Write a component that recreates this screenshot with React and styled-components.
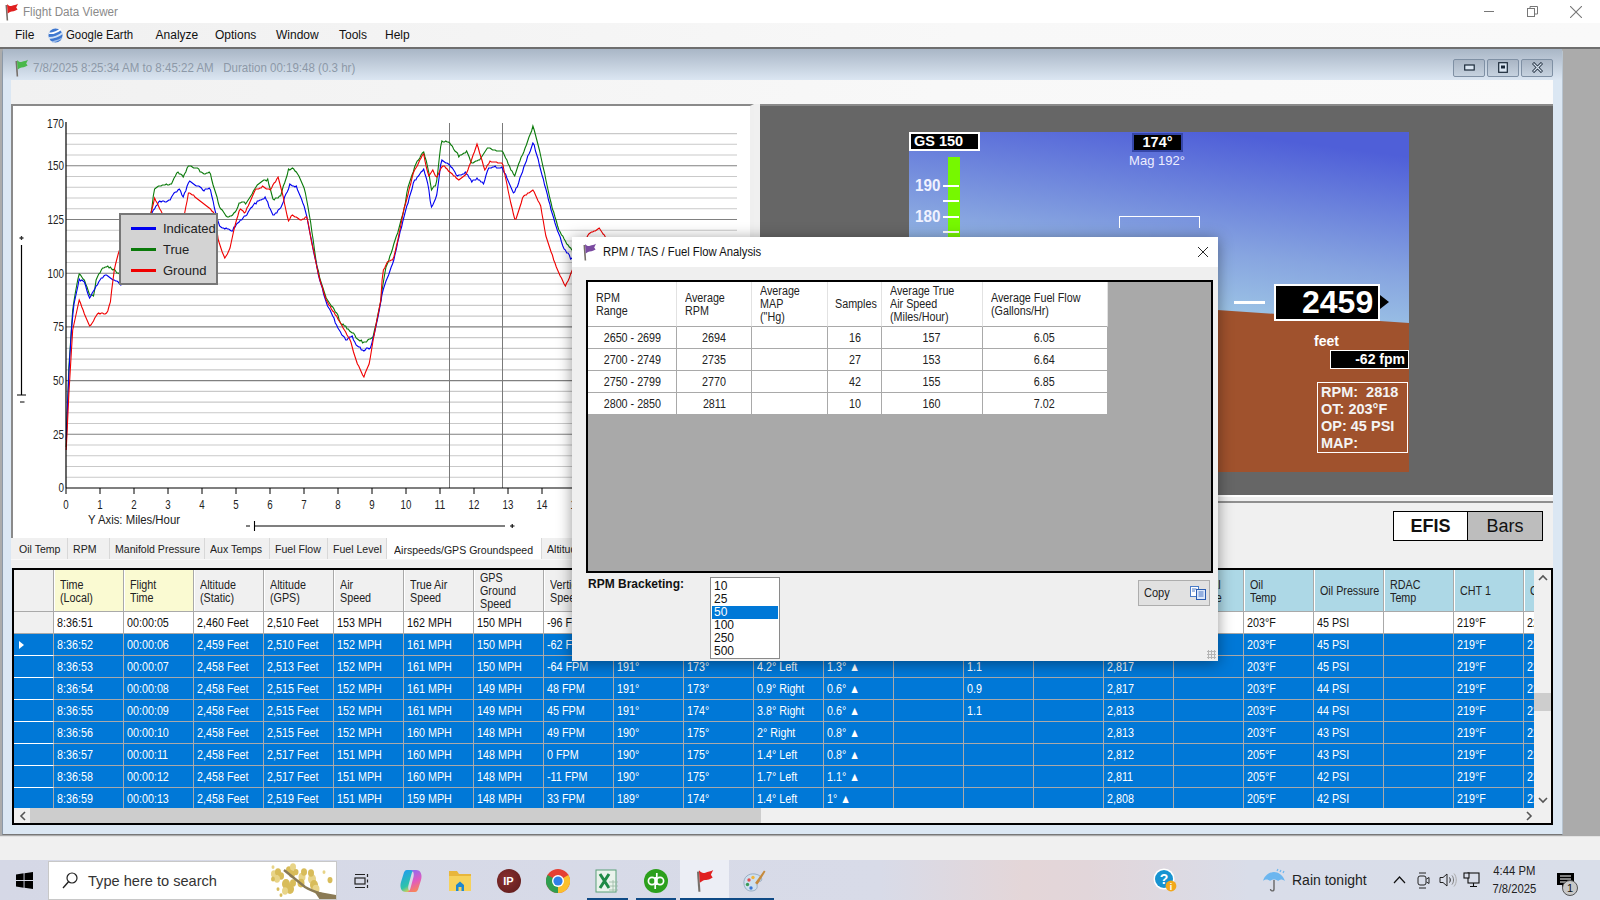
import React, { useMemo } from "react";
import styled, { createGlobalStyle } from "styled-components";

const Global = createGlobalStyle`
  html, body { margin: 0; padding: 0; overflow: hidden; background: #f0f0f0; }
  body { font-family: "Liberation Sans", Arial, sans-serif; font-size: 12px; color: #111; }
  * { box-sizing: border-box; }
`;

const Screen = styled.div`position: relative; width: 1600px; height: 900px; display: flex; flex-direction: column; overflow: hidden;`;
const TitleBar = styled.div`height: 23px; background: #fff; display: flex; align-items: center; padding-left: 4px; color: #8a8a8a; gap: 4px; flex: none;`;
const TitleText = styled.span`font-size: 12px;`;
const WinControls = styled.div`margin-left: auto; display: flex; align-items: center; padding-right: 18px; gap: 32px;`;
const MenuBar = styled.div`height: 24px; flex: none; background: linear-gradient(90deg, #f0f0f0, #f8f8f8 60%, #f9f9f9); display: flex; align-items: center; padding-left: 15px; color: #111;`;
const MenuItem = styled.span`width: ${p => p.$w}px; display: flex; align-items: center; gap: 3px; font-size: 12px;`;
const Mdi = styled.div`flex: 1; min-height: 0; background: #ababab; border-top: 2px solid #6e6e6e; padding: 0 37px 1px 2px; display: flex;`;
const Child = styled.div`flex: 1; display: flex; flex-direction: column; background: #dbe7f3; border-radius: 4px 4px 0 0; padding: 0 9px 10px 8px; border-left: 1px solid #8b99a8; border-bottom: 1px solid #777; border-right: 1px solid #b8c4d0;`;
const ChildTitle = styled.div`height: 31px; flex: none; margin: 0 -9px 0 -8px; padding: 6px 9px 0 11px; background: linear-gradient(180deg, #a9b6c6, #dbe6f2); display: flex; align-items: center; gap: 4px; color: #8d99a8; font-size: 12.4px; white-space: pre;`;
const ChildButtons = styled.div`margin-left: auto; display: flex; gap: 2px;`;
const ChildButton = styled.div`width: 32px; height: 18px; border: 1px solid #7f90a4; border-radius: 2px; background: linear-gradient(180deg, #a9b5c4, #c6d2df); display: flex; align-items: center; justify-content: center;`;
const ToolStrip = styled.div`height: 24px; flex: none; background: linear-gradient(90deg, #f1f1f1, #f8f8f8 60%, #fafafa);`;
const TopSplit = styled.div`display: flex; height: 464px; flex: none; background: #f0f0f0; gap: 6px;`;
const ChartColumn = styled.div`width: 743px; flex: none; display: flex; flex-direction: column;`;
const ChartPanel = styled.div`position: relative; height: 434px; flex: none; background: #fff; border-top: 2px solid #8a8a8a; border-left: 2px solid #8a8a8a; border-right: 4px solid #efefef;`;
const ChartSvg = styled.svg`display: block; position: absolute; left: -2px; top: -2px;`;
const Legend = styled.div`position: absolute; left: 106px; top: 107px; width: 99px; height: 72px; background: #d3d3d3; border: 2px solid #777; padding: 3px 0 0 10px; display: flex; flex-direction: column;`;
const LegendRow = styled.div`height: 21px; display: flex; align-items: center; gap: 7px; font-size: 13px; color: #222;`;
const LegendLine = styled.div`width: 25px; height: 2.5px; background: ${p => p.$c};`;
const TabStrip = styled.div`height: 22px; flex: none; display: flex; background: #f0f0f0; padding-left: 3px; overflow: hidden; border-bottom: 1px solid #f8f8f8;`;
const Tab = styled.div`width: ${p => p.$w}px; flex: none; display: flex; align-items: center; padding-left: ${p => p.$active ? 7 : 5}px; padding-top: ${p => p.$active ? 3 : 0}px; background: ${p => p.$active ? "#fff" : "#f0f0f0"}; border-right: 1px solid #d8d8d8; font-size: 11px; white-space: nowrap; color: #222;`;
const RightColumn = styled.div`flex: 1; display: flex; flex-direction: column; min-width: 0;`;
const EfisPanel = styled.div`height: 391px; flex: none; background: #666; border-top: 2px solid #8a8a8a; padding: 26px 0 0 149px;`;
const Scene = styled.div`position: relative; width: 500px; height: 340px; overflow: hidden;`;
const SceneBack = styled.svg`position: absolute; inset: 0;`;
const GsBox = styled.div`position: absolute; left: 0; top: 0; width: 71px; height: 19px; background: #000; border: 2px solid #fff; color: #fff; font-weight: bold; font-size: 14.5px; line-height: 15px; padding-left: 3px;`;
const HeadingBox = styled.div`position: absolute; left: 223px; top: 1px; width: 51px; height: 19px; background: #000; border: 2px solid #3546a8; color: #fff; font-weight: bold; font-size: 14.5px; line-height: 15px; text-align: center;`;
const MagLabel = styled.div`position: absolute; left: 213px; top: 21px; width: 70px; text-align: center; color: #eef; font-size: 13px;`;
const SpeedBar = styled.div`position: absolute; left: 39px; top: 25px; width: 12px; height: 130px; background: #76f800;`;
const SpeedTick = styled.div`position: absolute; left: 34px; top: ${p => p.$y}px; width: 16px; height: 1.5px; background: #fff;`;
const SpeedLabel = styled.div`position: absolute; left: 6px; top: ${p => p.$y}px; color: #f0f2ff; font-weight: bold; font-size: 16px; line-height: 18px; transform: scaleX(.95); transform-origin: left;`;
const Bracket = styled.div`position: absolute; left: 210px; top: 84px; width: 81px; height: 12px; border: 1.5px solid #fff; border-bottom: 0;`;
const Dash = styled.div`position: absolute; left: 325px; top: 169px; width: 31px; height: 3px; background: #fff;`;
const AltBox = styled.div`position: absolute; left: 365px; top: 152px; width: 106px; height: 37px; background: #000; border: 2px solid #fff; color: #fff; font-weight: bold; font-size: 32px; line-height: 33px; padding-left: 26px; &::after { content: ""; position: absolute; right: -11px; top: 9px; border-left: 9px solid #000; border-top: 7px solid transparent; border-bottom: 7px solid transparent; }`;
const FeetLabel = styled.div`position: absolute; left: 405px; top: 201px; color: #fff; font-weight: bold; font-size: 14px;`;
const FpmBox = styled.div`position: absolute; left: 421px; top: 218px; width: 79px; height: 19px; background: #000; border: 1.5px solid #fff; color: #fff; font-weight: bold; font-size: 14px; line-height: 16px; text-align: right; padding-right: 3px;`;
const EngineBox = styled.div`position: absolute; left: 408px; top: 250px; width: 91px; height: 71px; border: 1.5px solid #fff; color: #f4f4f4; font-weight: bold; font-size: 14.5px; line-height: 17px; padding: 1px 0 0 3px; white-space: pre;`;
const ToggleArea = styled.div`flex: 1; background: #f0f0f0; border-top: 2px solid #fff; position: relative; padding: 14px 0 0 633px;`;
const ToggleRule = styled.div`position: absolute; left: 0; right: 0; top: 4px; height: 2px; background: #8f8f8f;`;
const Toggle = styled.div`display: flex; width: 150px; height: 30px; border: 1.5px solid #000;`;
const ToggleItem = styled.div`flex: ${p => p.$f}; display: flex; align-items: center; justify-content: center; font-size: 18px; font-weight: ${p => p.$on ? "bold" : "normal"}; background: ${p => p.$on ? "#fff" : "#bdbdbd"}; & + & { border-left: 1.5px solid #000; }`;

const Grid = styled.div`flex: none; height: 257px; margin-left: 1px; border: 2px solid #000; background: #f0f0f0; display: flex; flex-direction: column;`;
const GridTop = styled.div`display: flex; height: 238px; flex: none;`;
const GridTable = styled.div`width: 1520px; flex: none; overflow: hidden;`;
const GridRow = styled.div`display: flex; height: ${p => p.$h || 22}px; width: 1660px; background: ${p => p.$sel ? "#0078d7" : "#fff"}; color: ${p => p.$sel ? "#fff" : "#111"}; border-bottom: 1px solid #a9a9a9;`;
const Corner = styled.div`width: 40px; flex: none; background: ${p => p.$sel ? "#0078d7" : "#f0f0f0"}; border-right: 1px solid #a9a9a9; ${p => p.$sel ? "border-bottom: 1px solid #fff; margin-bottom: -1px; position: relative; z-index: 1;" : ""} display: flex; align-items: center; padding-left: 5px;`;
const RowArrow = styled.div`border-left: 5px solid #fff; border-top: 4.5px solid transparent; border-bottom: 4.5px solid transparent;`;
const HeadCell = styled.div`width: 70px; flex: none; padding: 2px 0 0 5px; display: flex; align-items: center; background: ${p => p.$bg || "#f0f0f0"}; border-right: 1px solid #a9a9a9; border-left: 1px solid #fff; overflow: hidden; line-height: 13px; font-size: 12.5px; color: #222;`;
const DataCell = styled.div`width: 70px; flex: none; padding: 1px 0 0 3px; border-right: 1px solid #a9a9a9; overflow: hidden; line-height: 21px; font-size: 12.5px;`;
const Narrow = styled.span`display: inline-block; white-space: pre; transform: scaleX(${p => p.$k || 0.86}); transform-origin: ${p => p.$center ? "center" : "left center"};`;
const VScroll = styled.div`flex: 1; position: relative; background: #f0f0f0;`;
const ScrollUp = styled.div`position: absolute; top: 4px; left: 4px; display: flex;`;
const ScrollDown = styled.div`position: absolute; bottom: 4px; left: 4px; display: flex;`;
const ScrollLeft = styled.div`position: absolute; top: 3px; left: 5px; display: flex;`;
const ScrollRight = styled.div`position: absolute; top: 3px; left: 1512px; display: flex;`;
const VThumb = styled.div`position: absolute; left: 0; right: 0; top: 123px; height: 18px; background: #cdcdcd;`;
const HScroll = styled.div`flex: 1; display: flex; align-items: center; background: #f0f0f0; position: relative;`;
const HThumb = styled.div`position: absolute; left: 16px; width: 731px; top: 0; bottom: 0; background: #cdcdcd;`;

const Modal = styled.div`position: absolute; left: 572px; top: 237px; width: 646px; height: 424px; background: #efefef; box-shadow: 0 2px 14px rgba(0,0,0,.42); display: flex; flex-direction: column;`;
const ModalTitle = styled.div`height: 30px; flex: none; background: #fff; display: flex; align-items: center; padding: 0 10px 0 10px; gap: 6px; font-size: 12px; color: #111;`;
const ModalClose = styled.span`margin-left: auto; display: flex;`;
const ModalBody = styled.div`flex: 1; padding: 13px 5px 0 14px; position: relative;`;
const TablePane = styled.div`height: 293px; border: 2px solid #000; background: #a9a9a9;`;
const AnalysisGrid = styled.div`display: grid; grid-template-columns: 89px 75px 76px 54px 100.5px 125px; width: 519.5px; background: #fff;`;
const AHead = styled.div`height: 45px; display: flex; align-items: center; padding: 1px 0 0 ${p => p.$pl || 8}px; border-right: 1px solid #e2e2e2; border-bottom: 1px solid #a9a9a9; line-height: 13px; font-size: 12.5px; color: #222;`;
const ACell = styled.div`height: 22px; padding-top: 1px; display: flex; align-items: center; justify-content: center; border-right: 1px solid #a9a9a9; border-bottom: 1px solid #a9a9a9; font-size: 12.5px; color: #222;`;
const BottomRow = styled.div`display: flex; align-items: flex-start; padding-top: 4px;`;
const BracketLabel = styled.div`width: 124px; padding-left: 2px; font-weight: bold; font-size: 12px; color: #111; white-space: nowrap;`;
const ListBox = styled.div`width: 70px; height: 82px; background: #fff; border: 1px solid #8a8a8a; padding: 2px 1px 1px;`;
const ListItem = styled.div`height: 13px; line-height: 13px; padding-left: 2px; font-size: 12px; background: ${p => p.$sel ? "#0078d7" : "transparent"}; color: ${p => p.$sel ? "#fff" : "#111"};`;
const CopyButton = styled.div`margin-left: auto; margin-top: 3px; margin-right: 3px; width: 72px; height: 26px; background: #e1e1e1; border: 1px solid #adadad; display: flex; align-items: center; justify-content: space-between; padding: 0 3px 0 5px; font-size: 12px; color: #222;`;
const Grip = styled.div`position: absolute; right: 2px; bottom: 2px; width: 9px; height: 9px; background-image: radial-gradient(#b5b5b5 1px, transparent 1.2px); background-size: 3px 3px;`;

const StatusStrip = styled.div`height: 24px; flex: none; background: #f0f0f0; border-top: 1px solid #e2e2e2;`;
const Taskbar = styled.div`height: 40px; flex: none; display: flex; align-items: center; background: linear-gradient(90deg, #d5d8e6 0, #d8dbe8 55%, #e4d6d8 64%, #e2d6da 68%, #d9dde9 78%, #d9dee9 100%);`;
const StartSlot = styled.div`width: 48px; height: 100%; display: flex; align-items: center; justify-content: center; flex: none;`;
const SearchBox = styled.div`width: 289px; height: 39px; margin-top: 1px; flex: none; background: #fff; border: 1px solid #c8c8c8; display: flex; align-items: center; padding-left: 13px; gap: 10px; font-size: 14.6px; color: #333; position: relative; overflow: hidden;`;
const Branch = styled.svg`position: absolute; right: 0; top: 0;`;
const TaskSlot = styled.div`position: relative; width: 49px; height: 100%; padding-top: 2px; flex: none; display: flex; align-items: center; justify-content: center; background: ${p => p.$active ? "#eceef5" : "transparent"};
  ${p => p.$run ? `&::after { content: ""; position: absolute; left: ${p.$run[0]}px; right: ${p.$run[1]}px; bottom: 0; height: 2px; background: #0f4a85; }` : ""}`;
const TrayHelp = styled.div`margin-left: 375px; width: 24px; display: flex; flex: none;`;
const Weather = styled.div`margin-left: 85px; display: flex; align-items: center; gap: 6px; font-size: 14px; color: #222; flex: none; width: 110px;`;
const Tray = styled.div`display: flex; align-items: center; flex: none; margin-left: 21px;`;
const TrayIcon = styled.div`width: ${p => p.$w}px; flex: none; display: flex; align-items: center;`;
const Clock = styled.div`width: 58px; flex: none; text-align: center; font-size: 12px; line-height: 18px; color: #222;`;
const Notify = styled.div`position: relative; margin-left: 14px; width: 28px; height: 30px; padding-top: 8px; flex: none;`;
const NotifyBadge = styled.div`position: absolute; left: 5px; top: 15px; width: 16px; height: 16px; border-radius: 50%; background: #c8c8c8; border: 1px solid #555; font-size: 11px; line-height: 14px; text-align: center; color: #111;`;
const IpBadge = styled.div`width: 24px; height: 24px; border-radius: 50%; background: radial-gradient(circle at 40% 40%, #8a3030, #5a1a1a); color: #fff; font-weight: bold; font-size: 11px; display: flex; align-items: center; justify-content: center;`;

const Flag = ({ color = "#e02020", size = 1 }) => (
  <svg width={15 * size} height={18 * size} viewBox="0 0 15 18">
    <path d="M2.3 2 L3.4 17.5" stroke="#77706a" strokeWidth="1.6" fill="none" />
    <path d="M3 1 C5 3 6 3.5 8 2.8 C10 2.2 12 2 14 .8 L12.2 4.5 L13.6 6.6 C11 8.6 8 8.3 6 9 L3.7 10.5 Z" fill={color} />
  </svg>
);
const EarthIcon = () => (
  <svg width="15" height="17" viewBox="0 0 15 17">
    <circle cx="7.5" cy="8.5" r="7" fill="#3f78d0" />
    <path d="M1 6 C5 7 9 5 13 2" stroke="#fff" strokeWidth="1.6" fill="none" />
    <path d="M1 11 C6 11 11 9 14.5 6" stroke="#cfe0f6" strokeWidth="1.8" fill="none" />
    <path d="M4 15 C8 14 12 13 14 11" stroke="#9fbde8" strokeWidth="1.2" fill="none" />
  </svg>
);
const WinLogo = () => (
  <svg width="17" height="17" viewBox="0 0 17 17"><path d="M0 2.4 L7.6 1.3 V8 H0 Z M8.5 1.2 L17 0 V8 H8.5 Z M0 9 H7.6 V15.7 L0 14.6 Z M8.5 9 H17 V17 L8.5 15.8 Z" fill="#000" /></svg>
);
const SearchGlass = () => (
  <svg width="16" height="17" viewBox="0 0 16 17"><circle cx="10" cy="6" r="5" fill="none" stroke="#222" strokeWidth="1.2" /><path d="M6.5 9.8 L1 16" stroke="#222" strokeWidth="1.4" /></svg>
);
const GoldBranch = () => {
  const berries = [[6, 12, 3], [10, 10, 3], [13, 14, 3], [9, 17, 3], [5, 17, 2], [21, 8, 3], [25, 5, 3], [24, 12, 3], [28, 10, 2.5], [34, 15, 3.5], [36, 10, 3], [33, 21, 3.5], [44, 17, 4], [46, 23, 4], [43, 11, 3], [48, 27, 3.5], [18, 22, 4], [22, 27, 4], [17, 29, 3], [25, 21, 3], [62, 18, 2.5], [56, 10, 1.5], [10, 27, 1.5], [13, 33, 1.5], [5, 5, 1.5]];
  return (
    <Branch width="68" height="38" viewBox="0 0 68 38">
      {berries.map(([x, y, r], i) => <ellipse key={i} cx={x} cy={y} rx={r} ry={r * 1.25} fill={i % 3 ? "#d8bc5a" : "#e8d488"} />)}
      <path d="M68 37 C52 31 45 30 37 25 L16 8" stroke="#8a7a55" strokeWidth="2.4" fill="none" />
      <path d="M68 38 V33 L46 29 L52 38 Z" fill="#8a7a55" />
    </Branch>
  );
};
const TaskView = () => (
  <svg width="16" height="16" viewBox="0 0 16 16" fill="none" stroke="#222" strokeWidth="1.2"><rect x="1" y="5" width="10" height="6" /><path d="M1 1.5 H11 M1 14.5 H11 M13.5 1 V4 M13.5 6.5 V9.5 M13.5 12 V15" /></svg>
);
const Copilot = () => (
  <svg width="24" height="24" viewBox="0 0 24 24">
    <defs>
      <linearGradient id="cpa" x1="0.2" y1="0" x2="0.6" y2="1"><stop offset="0" stopColor="#1f9cf0" /><stop offset=".7" stopColor="#2fc4a8" /><stop offset="1" stopColor="#f6d24a" /></linearGradient>
      <linearGradient id="cpb" x1="0.4" y1="0" x2="0.7" y2="1"><stop offset="0" stopColor="#8f6cf0" /><stop offset=".5" stopColor="#e05ac0" /><stop offset="1" stopColor="#fb8a4c" /></linearGradient>
    </defs>
    <path d="M8 1 C6 1 5 3 4.5 5 L2 13 C0.5 18 2 23 7 23 H13 C10 23 8.5 20 9.5 16 L12.5 5 C13 3 14 1.5 16 1 Z" fill="url(#cpa)" />
    <path d="M16 23 C18 23 19 21 19.5 19 L22 11 C23.5 6 22 1 17 1 H11 C14 1 15.5 4 14.5 8 L11.5 19 C11 21 10 22.5 8 23 Z" fill="url(#cpb)" />
  </svg>
);
const FolderIcon = () => (
  <svg width="22" height="24" viewBox="0 0 22 24">
    <path d="M0 2 H8 L10 5 H22 V22 H0 Z" fill="#e8b63c" />
    <path d="M0 7 H22 V22 H0 Z" fill="#f6d25c" />
    <path d="M7 22 V16 L11 12.5 L15 16 V22 H12.5 V18 H9.5 V22 Z" fill="#1f88d0" />
  </svg>
);
const Chrome = () => (
  <svg width="24" height="24" viewBox="0 0 24 24">
    <circle cx="12" cy="12" r="12" fill="#e53f33" />
    <path d="M12 12 L22.4 6 A12 12 0 0 1 12 24 Z" fill="#fbc02d" />
    <path d="M12 12 L12 24 A12 12 0 0 1 1.6 6 Z" fill="#2f9e4f" />
    <circle cx="12" cy="12" r="6" fill="#fff" /><circle cx="12" cy="12" r="4.6" fill="#2f7fe8" />
  </svg>
);
const Excel = () => (
  <svg width="24" height="24" viewBox="0 0 24 24">
    <rect x="1" y="1" width="20" height="22" fill="#eaf3ec" stroke="#5aa078" />
    <path d="M5 5 L14 19 M14 5 L5 19" stroke="#1f8a45" strokeWidth="3" />
    <path d="M14 13 H23 M14 17 H23 M14 21 H23 M18 11 V23" stroke="#9ab8a3" strokeWidth=".8" />
  </svg>
);
const QuickBooks = () => (
  <svg width="24" height="24" viewBox="0 0 24 24">
    <circle cx="12" cy="12" r="12" fill="#2ca01c" />
    <circle cx="8" cy="12" r="3.6" fill="none" stroke="#fff" strokeWidth="1.7" />
    <path d="M11.2 8 V20" stroke="#fff" strokeWidth="1.7" />
    <circle cx="16" cy="12" r="3.6" fill="none" stroke="#fff" strokeWidth="1.7" />
    <path d="M12.8 4 V16" stroke="#fff" strokeWidth="1.7" />
  </svg>
);
const Palette = () => (
  <svg width="24" height="24" viewBox="0 0 24 24">
    <path d="M2 15 C1 8 7 4 13 5 C19 6 21 10 19 12 C17 13 14 13 15 16 C16 20 13 22 9 22 C5 22 2.5 19 2 15 Z" fill="#cfe0ee" stroke="#8aa0b8" strokeWidth=".8" />
    <circle cx="7" cy="11" r="1.7" fill="#e24c4c" /><circle cx="11" cy="8.5" r="1.7" fill="#f2b53c" /><circle cx="5.5" cy="15.5" r="1.7" fill="#3a9a5a" /><circle cx="9" cy="19" r="1.7" fill="#3a78d8" />
    <path d="M13 14 L22 1.5 L23.5 2.5 L15.5 15.5 Z" fill="#c68a3c" />
  </svg>
);
const HelpIcon = () => (
  <svg width="24" height="24" viewBox="0 0 24 24">
    <circle cx="11" cy="11" r="10.5" fill="#fff" /><circle cx="11" cy="11" r="9" fill="#1793d1" />
    <text x="11" y="16" textAnchor="middle" fontSize="14" fontWeight="bold" fill="#fff" fontFamily="Liberation Sans">?</text>
    <circle cx="18" cy="18" r="5.4" fill="#f2a81c" />
    <text x="18" y="21.5" textAnchor="middle" fontSize="9" fontWeight="bold" fill="#fff" fontFamily="Liberation Sans">i</text>
  </svg>
);
const Umbrella = () => (
  <svg width="24" height="24" viewBox="0 0 24 24">
    <path d="M1 13 C3 6 9 4 12 4 C16 4 21 7 23 13 C20 11 18 11 16 13 C14 11 10 11 8 13 C6 11 3 11 1 13 Z" fill="#6cb6ef" />
    <path d="M12 12 V21 C12 23.5 8.5 23.5 8.5 21" fill="none" stroke="#666" strokeWidth="1.4" />
    <path d="M15 3 L16 1 M18 4 L19 2 M21 5 L22 3" stroke="#6cb6ef" strokeWidth="1.2" />
  </svg>
);
const TrayChevron = () => (<svg width="13" height="8" viewBox="0 0 13 8"><path d="M1 7 L6.5 1 L12 7" fill="none" stroke="#111" strokeWidth="1.2" /></svg>);
const CamIcon = () => (<svg width="13" height="17" viewBox="0 0 13 17" fill="none" stroke="#222" strokeWidth="1"><path d="M2 1 H9 M2 16 H9" /><rect x="1" y="4" width="8" height="9" rx="2" /><path d="M9.5 7 L12 5.5 V11.5 L9.5 10" /></svg>);
const SpeakerIcon = () => (<svg width="18" height="16" viewBox="0 0 18 16" fill="none" stroke="#222" strokeWidth="1"><path d="M1 5.5 H4 L8 2 V14 L4 10.5 H1 Z" /><path d="M10.5 5.5 C11.5 7 11.5 9 10.5 10.5" /><path d="M13 3.5 C15 6 15 10 13 12.5" stroke="#777" /><path d="M15 1.5 C18 5 18 11 15 14.5" stroke="#aaa" /></svg>);
const NetIcon = () => (<svg width="17" height="16" viewBox="0 0 17 16" fill="none" stroke="#111" strokeWidth="1.1"><rect x="5" y="1" width="11" height="10" /><rect x="1" y="1" width="5" height="5" fill="#d9dde9" /><path d="M10.5 11 V14.5 M7 14.5 H14" /></svg>);
const NotifyIcon = () => (<svg width="17" height="15" viewBox="0 0 17 15"><path d="M0 0 H17 V12 H8 L5 15 V12 H0 Z" fill="#000" /><path d="M3 3 H14 M3 6 H14 M3 9 H10" stroke="#fff" strokeWidth="1" /></svg>);
const CopyIcon = () => (
  <svg width="16" height="14" viewBox="0 0 16 14">
    <rect x=".5" y=".5" width="8" height="10" fill="#fff" stroke="#4a7cc8" />
    <rect x="6.5" y="3.5" width="9" height="10" fill="#dce8fa" stroke="#2a5cb0" />
    <path d="M8.5 6 H13.5 M8.5 8 H13.5 M8.5 10 H13.5 M2 3 H6.5 M2 5 H5" stroke="#3a6cc0" strokeWidth=".9" />
  </svg>
);
const Cross = ({ s = 10, c = "#222" }) => (<svg width={s} height={s} viewBox="0 0 10 10"><path d="M0 0 L10 10 M10 0 L0 10" stroke={c} strokeWidth=".9" /></svg>);

const z1 = a => { const r = []; for (let i = 0; i < a.length; i += 2) r.push([a[i] / 1.96, a[i + 1] / 3]); return r; };
const z3 = a => { const r = []; for (let i = 0; i < a.length; i += 2) r.push([a[i] / 2.613, 300 + a[i + 1] / 3]); return r; };

const greenPts = [
  ...z3([173, 440, 176, 330, 180, 200, 186, 100, 190, 30]),
  ...z1([146, 890, 155, 820, 165, 840, 175, 885, 183, 890, 190, 830, 205, 800, 220, 805, 235, 825, 250, 830, 296, 640, 303, 565, 320, 553, 335, 555, 348, 515, 360, 530, 370, 495, 385, 505, 400, 520, 412, 518, 420, 565, 430, 620, 446, 655, 460, 640, 470, 605, 482, 610, 498, 570, 510, 545, 525, 540, 535, 600, 550, 590, 565, 510, 575, 505, 590, 540, 598, 570, 610, 680, 620, 790, 630, 850]),
  ...z3([855, 0, 880, 40, 890, 70, 910, 88, 925, 100, 935, 118, 950, 128, 975, 110, 985, 60, 995, 0]),
  ...z1([755, 810, 775, 720, 790, 640, 800, 560, 815, 490, 830, 455, 840, 510, 845, 570, 855, 555, 865, 425, 880, 425, 900, 470, 915, 455, 925, 490, 940, 480, 955, 445, 985, 455, 1008, 530, 1025, 460, 1045, 378, 1060, 470, 1080, 610, 1095, 690, 1110, 730, 1122, 750, 1160, 800]),
];
const bluePts = [
  ...z3([173, 420, 176, 330, 180, 220, 186, 100, 192, 20]),
  ...z1([155, 840, 165, 845, 175, 895, 190, 855, 205, 825, 220, 835, 235, 852, 250, 850, 296, 640, 312, 605, 330, 605, 350, 565, 360, 590, 370, 545, 385, 555, 400, 570, 412, 565, 420, 620, 430, 680, 455, 692, 470, 660, 480, 650, 500, 610, 520, 590, 535, 648, 550, 625, 568, 555, 580, 558, 590, 590, 600, 640, 610, 720, 625, 830]),
  ...z3([850, 0, 870, 50, 885, 90, 905, 120, 920, 110, 935, 140, 950, 152, 970, 140, 980, 90, 995, 10]),
  ...z1([750, 870, 770, 790, 790, 660, 810, 550, 830, 505, 840, 560, 845, 622, 855, 595, 865, 480, 880, 490, 895, 525, 915, 520, 925, 545, 935, 535, 948, 550, 958, 500, 985, 505, 1008, 582, 1025, 510, 1045, 428, 1060, 510, 1075, 600, 1090, 680, 1105, 745, 1122, 780, 1160, 820]),
];
const redPts = [
  ...z3([173, 450, 180, 280, 190, 90, 207, 0, 220, 40, 235, 80, 255, 40, 280, 40, 290, 0]),
  ...z1([218, 880, 225, 800, 234, 750, 270, 690, 296, 640, 303, 595, 318, 640, 340, 680, 362, 640, 370, 575, 390, 600, 410, 625, 420, 640, 428, 720, 440, 775, 450, 750, 460, 680, 470, 625, 480, 640, 500, 570, 515, 560, 530, 570, 545, 530, 555, 590, 565, 665, 572, 645, 590, 660, 602, 650, 610, 720, 625, 830]),
  ...z3([852, 0, 880, 50, 900, 90, 915, 120, 930, 180, 950, 232, 965, 190, 975, 120, 995, 0]),
  ...z1([750, 815, 760, 785, 770, 780, 780, 720, 790, 640, 810, 520, 830, 460, 840, 530, 848, 510, 855, 535, 868, 495, 885, 520, 900, 540, 915, 520, 935, 432, 950, 510, 960, 485, 985, 490, 1000, 600, 1010, 665, 1025, 590, 1045, 570, 1060, 620, 1070, 710, 1090, 800, 1108, 860, 1122, 810, 1140, 740, 1155, 700, 1175, 685, 1190, 720]),
];

const buildLine = (pts, noise, seed) => {
  const s = [...pts].sort((a, b) => a[0] - b[0]);
  const out = [];
  let j = 0;
  for (let x = s[0][0]; x <= s[s.length - 1][0]; x += 1.3) {
    while (j < s.length - 2 && s[j + 1][0] < x) j++;
    const [x0, y0] = s[j], [x1, y1] = s[j + 1];
    const t = x1 === x0 ? 0 : Math.min(1, (x - x0) / (x1 - x0));
    const n = Math.sin(x * 12.9898 + seed) * 43758.5453;
    const y = y0 + (y1 - y0) * t + (n - Math.floor(n) - 0.5) * noise;
    out.push(`${x.toFixed(1)},${Math.round(y)}`);
  }
  return out.join(" ");
};

const Chart = () => {
  const lines = useMemo(() => [
    [greenPts, "#0a7a0a", 2, 1],
    [bluePts, "#0000f0", 2.2, 2],
    [redPts, "#f00000", 0.8, 3],
  ].map(([p, c, n, s]) => ({ c, d: buildLine(p, n, s) })), []);
  const yOf = v => 488 - v * 2.148;
  const minors = []; for (let v = 5; v <= 165; v += 5) minors.push(v);
  const xs = []; for (let i = 0; i <= 15; i++) xs.push(i);
  const yLabels = [0, 25, 50, 75, 100, 125, 150];
  return (
    <ChartSvg width="743" height="434" viewBox="11 104 743 434">
      {minors.filter(v => v % 25).map(v => <line key={v} x1="66" x2="737" y1={yOf(v)} y2={yOf(v)} stroke="#c9c9c9" strokeWidth="1.1" />)}
      {minors.filter(v => !(v % 25)).map(v => <line key={v} x1="66" x2="737" y1={yOf(v)} y2={yOf(v)} stroke="#808080" strokeWidth="1.1" />)}
      <line x1="449.5" x2="449.5" y1="123" y2="488" stroke="#7a7a7a" />
      <line x1="502.5" x2="502.5" y1="123" y2="488" stroke="#7a7a7a" />
      {lines.map(l => <polyline key={l.c} points={l.d} fill="none" stroke={l.c} strokeWidth="1.1" />)}
      <line x1="66" x2="66" y1="122" y2="488" stroke="#000" strokeWidth="1.2" />
      <line x1="66" x2="737" y1="488" y2="488" stroke="#000" strokeWidth="1.2" />
      {xs.map(i => <line key={i} x1={66 + i * 34} x2={66 + i * 34} y1="488" y2="494" stroke="#000" />)}
      {xs.map(i => { const t = String(i); return <text key={i} x={66 + i * 34} y="509" fontSize="13.5" fill="#222" textAnchor="middle" textLength={t.length * 5.4} lengthAdjust="spacingAndGlyphs" fontFamily="Liberation Sans">{t}</text>; })}
      {yLabels.map(v => { const t = String(v); return <text key={v} x="64" y={v === 0 ? 492 : yOf(v) + 4.5} fontSize="13.5" fill="#222" textAnchor="end" textLength={t.length * 5.5} lengthAdjust="spacingAndGlyphs" fontFamily="Liberation Sans">{t}</text>; })}
      <text x="64" y="128" fontSize="13.5" fill="#222" textAnchor="end" textLength="17" lengthAdjust="spacingAndGlyphs" fontFamily="Liberation Sans">170</text>
      <text x="88" y="524" fontSize="12.5" fill="#222" textLength="92" lengthAdjust="spacingAndGlyphs" fontFamily="Liberation Sans">Y Axis: Miles/Hour</text>
      <path d="M19.5 238 H23.5 M21.5 236 V240" stroke="#333" strokeWidth="1.3" />
      <path d="M21.5 245 V395 M17 395 H26 M20 402 H24.5" stroke="#000" strokeWidth="1.2" />
      <path d="M246 526 H250 M254.5 521 V531 M254.5 526 H505 M510 526 H514.5 M512.2 524 V528" stroke="#000" strokeWidth="1.1" />
    </ChartSvg>
  );
};

const heads = [
  ["Time\n(Local)", "#fafad2"], ["Flight\nTime", "#fafad2"], ["Altitude\n(Static)"], ["Altitude\n(GPS)"], ["Air\nSpeed"], ["True Air\nSpeed"], ["GPS\nGround\nSpeed"], ["Vertical\nSpeed"],
  ["Magnetic\nCourse"], ["Ground\nTrack"], ["Slip\nAngle"], ["Pitch"], ["Fuel\nLevel"], ["G\nForce"], ["Amps"], ["RPM"], ["Terminal\nMeasure", "#add8e6"],
  ["Oil\nTemp", "#add8e6"], ["Oil Pressure", "#add8e6"], ["RDAC\nTemp", "#add8e6"], ["CHT 1", "#add8e6"], ["CHT 2", "#add8e6"],
];
const row = (t, f, a, g, air, tas, gs, vs, m, c, sl, p, x, r, o, op, c2 = "221°F") => [t, f, `2,${a} Feet`, `2,${g} Feet`, `${air} MPH`, `${tas} MPH`, `${gs} MPH`, `${vs} FPM`, m, c, sl, p, "", x, "", r, "", o, `${op} PSI`, "", "219°F", c2];
const rows = [
  row("8:36:51", "00:00:05", 460, 510, 153, 162, 150, -96, "191°", "172°", "3.9° Left", "1.5° ▲", "", "2,818", "203°F", 45),
  row("8:36:52", "00:00:06", 459, 510, 152, 161, 150, -62, "191°", "173°", "4.4° Left", "1.4° ▲", "", "2,818", "203°F", 45),
  row("8:36:53", "00:00:07", 458, 513, 152, 161, 150, -64, "191°", "173°", "4.2° Left", "1.3° ▲", "1.1", "2,817", "203°F", 45),
  row("8:36:54", "00:00:08", 458, 515, 152, 161, 149, 48, "191°", "173°", "0.9° Right", "0.6° ▲", "0.9", "2,817", "203°F", 44),
  row("8:36:55", "00:00:09", 458, 515, 152, 161, 149, 45, "191°", "174°", "3.8° Right", "0.6° ▲", "1.1", "2,813", "203°F", 44),
  row("8:36:56", "00:00:10", 458, 515, 152, 160, 148, 49, "190°", "175°", "2° Right", "0.8° ▲", "", "2,813", "203°F", 43),
  row("8:36:57", "00:00:11", 458, 517, 151, 160, 148, 0, "190°", "175°", "1.4° Left", "0.8° ▲", "", "2,812", "205°F", 43),
  row("8:36:58", "00:00:12", 458, 517, 151, 160, 148, -11, "190°", "175°", "1.7° Left", "1.1° ▲", "", "2,811", "205°F", 42),
  row("8:36:59", "00:00:13", 458, 519, 151, 159, 148, 33, "189°", "174°", "1.4° Left", "1° ▲", "", "2,808", "205°F", 42),
];

const analysisHeads = [["RPM\nRange"], ["Average\nRPM"], ["Average\nMAP\n(\"Hg)"], ["Samples", 7], ["Average True\nAir Speed\n(Miles/Hour)"], ["Average Fuel Flow\n(Gallons/Hr)"]];
const analysisRows = [
  ["2650 - 2699", "2694", "", "16", "157", "6.05"],
  ["2700 - 2749", "2735", "", "27", "153", "6.64"],
  ["2750 - 2799", "2770", "", "42", "155", "6.85"],
  ["2800 - 2850", "2811", "", "10", "160", "7.02"],
];
const tabs = [["Oil Temp", 53.5], ["RPM", 42], ["Manifold Pressure", 95.5], ["Aux Temps", 65], ["Fuel Flow", 57.5], ["Fuel Level", 59.5], ["Airspeeds/GPS Groundspeed", 154.5, true], ["Altitudes", 60]];
const menus = [["File", 33], ["Google Earth", 107.6, true], ["Analyze", 59.4], ["Options", 61], ["Window", 63], ["Tools", 46], ["Help", 40]];
const taskApps = [
  [<TaskView key="a" />], [<Copilot key="b" />], [<FolderIcon key="c" />], [<IpBadge key="d">IP</IpBadge>], [<Chrome key="e" />],
  [<Excel key="f" />, [5, 3]], [<QuickBooks key="g" />, [5, 4]], [<Flag key="h" size={1.3} />, [0, 0], true], [<Palette key="i" />, [0, 4]],
];

export default function App() {
  return (
    <Screen>
      <Global />
      <TitleBar>
        <Flag />
        <TitleText><Narrow $k={0.97}>Flight Data Viewer</Narrow></TitleText>
        <WinControls>
          <svg width="11" height="11" viewBox="0 0 11 11"><path d="M0 5.5 H10" stroke="#777" /></svg>
          <svg width="11" height="11" viewBox="0 0 11 11" fill="none" stroke="#777"><rect x=".5" y="2.5" width="7" height="8" /><path d="M3 2.5 V.5 H10.5 V8 H7.5" /></svg>
          <Cross s={12} c="#777" />
        </WinControls>
      </TitleBar>
      <MenuBar>
        {menus.map(([m, w, ic]) => <MenuItem key={m} $w={w}>{ic && <EarthIcon />}<Narrow $k={ic ? 0.95 : 1}>{m}</Narrow></MenuItem>)}
      </MenuBar>
      <Mdi>
        <Child>
          <ChildTitle>
            <Flag color="#49b84a" />
            <Narrow $k={0.93}>{"7/8/2025 8:25:34 AM to 8:45:22 AM   Duration 00:19:48 (0.3 hr)"}</Narrow>
            <ChildButtons>
              <ChildButton><svg width="11" height="7" viewBox="0 0 11 7"><rect x=".7" y="1" width="9.5" height="5" fill="#dbe6f2" stroke="#1a2838" strokeWidth="1.2" /></svg></ChildButton>
              <ChildButton><svg width="10" height="11" viewBox="0 0 10 11"><rect x=".7" y=".7" width="8.6" height="9.6" fill="#dbe6f2" stroke="#1a2838" strokeWidth="1.2" /><rect x="3" y="3.5" width="4" height="3" fill="#1a2838" /></svg></ChildButton>
              <ChildButton><svg width="11" height="11" viewBox="0 0 11 11"><path d="M1 1 L10 10 M10 1 L1 10" stroke="#1a2838" strokeWidth="3" /><path d="M1.5 1.5 L9.5 9.5 M9.5 1.5 L1.5 9.5" stroke="#dbe6f2" strokeWidth="1.2" /></svg></ChildButton>
            </ChildButtons>
          </ChildTitle>
          <ToolStrip />
          <TopSplit>
            <ChartColumn>
              <ChartPanel>
                <Chart />
                <Legend>
                  <LegendRow><LegendLine $c="#0000f0" />Indicated</LegendRow>
                  <LegendRow><LegendLine $c="#0a7a0a" />True</LegendRow>
                  <LegendRow><LegendLine $c="#f00000" />Ground</LegendRow>
                </Legend>
              </ChartPanel>
              <TabStrip>
                {tabs.map(([t, w, a]) => <Tab key={t} $w={w} $active={a}><Narrow $k={0.96}>{t}</Narrow></Tab>)}
              </TabStrip>
            </ChartColumn>
            <RightColumn>
              <EfisPanel>
                <Scene>
                  <SceneBack width="500" height="340" viewBox="0 0 500 340">
                    <defs>
                      <linearGradient id="sky" x1="0.62" y1="0" x2="0.5" y2="0.62">
                        <stop offset="0" stopColor="#4f5fd8" />
                        <stop offset=".55" stopColor="#87a5e0" />
                        <stop offset="1" stopColor="#a9d6e8" />
                      </linearGradient>
                    </defs>
                    <rect width="500" height="340" fill="url(#sky)" />
                    <path d="M0 157 L500 191 V340 H0 Z" fill="#a0522d" />
                  </SceneBack>
                  <SpeedBar />
                  <SpeedTick $y={53} /><SpeedTick $y={68} /><SpeedTick $y={84} /><SpeedTick $y={99} /><SpeedTick $y={115} />
                  <SpeedLabel $y={45}>190</SpeedLabel>
                  <SpeedLabel $y={76}>180</SpeedLabel>
                  <GsBox>GS 150</GsBox>
                  <HeadingBox>174°</HeadingBox>
                  <MagLabel>Mag 192°</MagLabel>
                  <Bracket />
                  <Dash />
                  <AltBox>2459</AltBox>
                  <FeetLabel>feet</FeetLabel>
                  <FpmBox>-62 fpm</FpmBox>
                  <EngineBox>{"RPM:  2818\nOT: 203°F\nOP: 45 PSI\nMAP:"}</EngineBox>
                </Scene>
              </EfisPanel>
              <ToggleArea>
                <ToggleRule />
                <Toggle>
                  <ToggleItem $f={74} $on>EFIS</ToggleItem>
                  <ToggleItem $f={75}>Bars</ToggleItem>
                </Toggle>
              </ToggleArea>
            </RightColumn>
          </TopSplit>
          <Grid>
            <GridTop>
              <GridTable>
                <GridRow $h={42}>
                  <Corner />
                  {heads.map(([h, bg], i) => <HeadCell key={i} $bg={bg}><Narrow>{h}</Narrow></HeadCell>)}
                </GridRow>
                {rows.map((r, i) => (
                  <GridRow key={i} $sel={i > 0}>
                    <Corner $sel={i > 0}>{i === 1 && <RowArrow />}</Corner>
                    {r.map((c, j) => <DataCell key={j}><Narrow>{c}</Narrow></DataCell>)}
                  </GridRow>
                ))}
              </GridTable>
              <VScroll>
                <ScrollUp><svg width="10" height="7" viewBox="0 0 10 7"><path d="M1 6 L5 2 L9 6" fill="none" stroke="#555" strokeWidth="1.6" /></svg></ScrollUp>
                <VThumb />
                <ScrollDown><svg width="10" height="7" viewBox="0 0 10 7"><path d="M1 1 L5 5 L9 1" fill="none" stroke="#555" strokeWidth="1.6" /></svg></ScrollDown>
              </VScroll>
            </GridTop>
            <HScroll>
              <ScrollLeft><svg width="7" height="10" viewBox="0 0 7 10"><path d="M6 1 L2 5 L6 9" fill="none" stroke="#555" strokeWidth="1.6" /></svg></ScrollLeft>
              <HThumb />
              <ScrollRight><svg width="7" height="10" viewBox="0 0 7 10"><path d="M1 1 L5 5 L1 9" fill="none" stroke="#555" strokeWidth="1.6" /></svg></ScrollRight>
            </HScroll>
          </Grid>
        </Child>
      </Mdi>
      <StatusStrip />
      <Taskbar>
        <StartSlot><WinLogo /></StartSlot>
        <SearchBox>
          <SearchGlass />
          <span>Type here to search</span>
          <GoldBranch />
        </SearchBox>
        {taskApps.map(([ic, run, act], i) => <TaskSlot key={i} $run={run} $active={act}>{ic}</TaskSlot>)}
        <TrayHelp><HelpIcon /></TrayHelp>
        <Weather><Umbrella />Rain tonight</Weather>
        <Tray>
          <TrayIcon $w={24}><TrayChevron /></TrayIcon>
          <TrayIcon $w={22}><CamIcon /></TrayIcon>
          <TrayIcon $w={24}><SpeakerIcon /></TrayIcon>
          <TrayIcon $w={22}><NetIcon /></TrayIcon>
        </Tray>
        <Clock><Narrow $k={0.94} $center>4:44 PM</Narrow><br /><Narrow $k={0.94} $center>7/8/2025</Narrow></Clock>
        <Notify>
          <NotifyIcon />
          <NotifyBadge>1</NotifyBadge>
        </Notify>
      </Taskbar>
      <Modal>
        <ModalTitle>
          <Flag color="#7a4aa0" />
          <Narrow $k={0.94}>RPM / TAS / Fuel Flow Analysis</Narrow>
          <ModalClose><Cross s={10} c="#111" /></ModalClose>
        </ModalTitle>
        <ModalBody>
          <TablePane>
            <AnalysisGrid>
              {analysisHeads.map(([h, pl], i) => <AHead key={i} $pl={pl}><Narrow>{h}</Narrow></AHead>)}
              {analysisRows.flat().map((c, i) => <ACell key={i}><Narrow $center>{c}</Narrow></ACell>)}
            </AnalysisGrid>
          </TablePane>
          <BottomRow>
            <BracketLabel>RPM Bracketing:</BracketLabel>
            <ListBox>
              {["10", "25", "50", "100", "250", "500"].map(v => <ListItem key={v} $sel={v === "50"}>{v}</ListItem>)}
            </ListBox>
            <CopyButton><Narrow $k={0.92}>Copy</Narrow><CopyIcon /></CopyButton>
          </BottomRow>
          <Grip />
        </ModalBody>
      </Modal>
    </Screen>
  );
}
